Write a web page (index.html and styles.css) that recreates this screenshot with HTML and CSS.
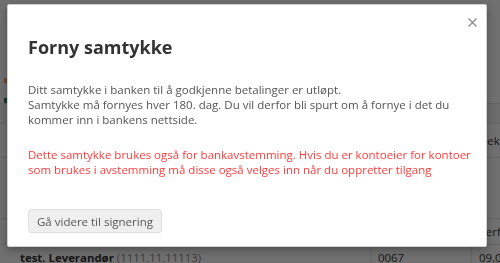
FILE: index.html
```html
<!DOCTYPE html>
<html lang="no">
<head>
  <meta charset="UTF-8" />
  <title>Forny samtykke</title>
  <link rel="stylesheet" href="styles.css">
</head>
<body>
  <div class="page">
    <div class="flags">
      <span class="flag orange"></span>
      <span class="flag green"></span>
    </div>
    <div class="table">
      <div class="row head">
        <div class="cell main"></div>
        <div class="cell num"></div>
        <div class="cell side"></div>
      </div>
      <div class="row tall">
        <div class="cell main"></div>
        <div class="cell num"></div>
        <div class="cell side">Dekl.</div>
      </div>
      <div class="row taller">
        <div class="cell main"></div>
        <div class="cell num"></div>
        <div class="cell side"></div>
      </div>
      <div class="row">
        <div class="cell main"></div>
        <div class="cell num"></div>
        <div class="cell side">Perf.</div>
      </div>
      <div class="row">
        <div class="cell main"><strong>test. Leverandør</strong> <span class="muted">(1111.11.11113)</span></div>
        <div class="cell num">0067</div>
        <div class="cell side">09.02</div>
      </div>
    </div>
  </div>

  <div class="backdrop"></div>

  <div class="modal">
    <div class="modal-header">
      <button class="close" aria-label="Lukk">
        <svg width="9" height="9" viewBox="0 0 9 9">
          <path d="M1 1 L8 8 M8 1 L1 8" stroke="#9a9a9a" stroke-width="1.7" stroke-linecap="round" />
        </svg>
      </button>
      <h4 class="modal-title">Forny samtykke</h4>
    </div>
    <div class="modal-body">
      <p>Ditt samtykke i banken til å godkjenne betalinger er utløpt.<br>
      Samtykke må fornyes hver 180. dag. Du vil derfor bli spurt om å fornye i det du kommer inn i bankens nettside.</p>
      <p class="warning">Dette samtykke brukes også for bankavstemming. Hvis du er kontoeier for kontoer som brukes i avstemming må disse også velges inn når du oppretter tilgang</p>
    </div>
    <div class="modal-footer">
      <button class="btn">Gå videre til signering</button>
    </div>
  </div>
</body>
</html>
```

FILE: styles.css
```css
body {
  margin: 0;
  font-family: 'Open Sans', 'Noto Sans', sans-serif;
  font-size: 11.4px;
  color: #333;
  background: #fff;
}

.page {
  padding-top: 78px;
}

.flags {
  display: flex;
  flex-direction: column;
  gap: 15px;
  padding-left: 4px;
  height: 25px;
}

.flag {
  width: 3px;
  height: 5px;
}

.flag.orange {
  background: #f0a060;
}

.flag.green {
  background: #2a8a6a;
}

.row {
  display: grid;
  grid-template-columns: 370px 101px 1fr;
  height: 25px;
  border-top: 1px solid #e4e4e4;
}

.row.head {
  height: 19px;
  background: #f6f6f6;
}

.row.tall {
  height: 33px;
}

.row.taller {
  height: 60px;
}

.cell {
  display: flex;
  align-items: center;
  padding-left: 7px;
  white-space: nowrap;
  overflow: hidden;
}

.cell.main {
  padding-left: 20px;
}

.cell.num,
.cell.side {
  border-left: 1px solid #e4e4e4;
}

.muted {
  color: #888;
  margin-left: 3px;
}

.backdrop {
  position: fixed;
  inset: 0;
  background: rgba(0, 0, 0, 0.56);
}

.modal {
  position: fixed;
  left: 7px;
  top: 4px;
  width: 480px;
  height: 243px;
  box-sizing: border-box;
  padding: 0 14px 13px 20px;
  background: #fff;
  border: 1px solid #d0d0d0;
  border-radius: 2px;
  box-shadow: 0 3px 9px rgba(0, 0, 0, 0.3);
  display: flex;
  flex-direction: column;
}

.modal-header {
  display: flex;
  flex-direction: column;
}

.close {
  align-self: flex-end;
  margin: 10px -7px 0 0;
  padding: 0;
  width: 14px;
  height: 14px;
  border: none;
  background: none;
  display: flex;
  align-items: center;
  justify-content: center;
  cursor: pointer;
}

.modal-title {
  margin: 7px 0 0;
  font-size: 18px;
  line-height: 22px;
  font-weight: 700;
  color: #333;
}

.modal-body {
  margin-top: 24px;
  font-size: 11.5px;
  line-height: 15.2px;
  color: #555;
}

.modal-body p {
  margin: 0 0 19px;
}

.modal-body .warning {
  color: #ff3b3b;
  margin: 0;
}

.modal-footer {
  margin-top: auto;
}

.btn {
  font-family: inherit;
  font-size: 11.5px;
  color: #555;
  background: #efefef;
  border: 1px solid #e0e0e0;
  border-radius: 3px;
  height: 24px;
  padding: 0 8px;
  cursor: pointer;
}
```
